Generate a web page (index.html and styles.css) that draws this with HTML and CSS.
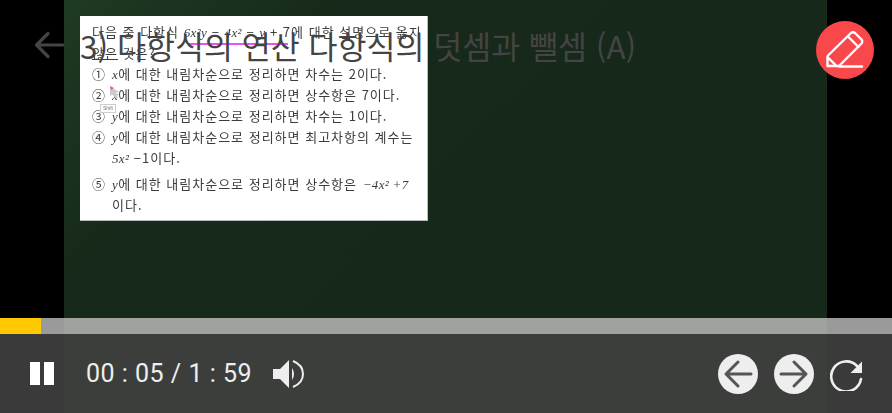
FILE: index.html
```html
<!DOCTYPE html>
<html lang="ko">
<head>
    <meta charset="UTF-8">
    <meta name="viewport" content="width=device-width, initial-scale=1.0">
    <title>다항식의 덧셈과 뺄셈</title>
    <link rel="stylesheet" href="styles.css">
</head>
<body>
    <div class="player">
        <!-- 영상 화면 -->
        <div class="video">
            <div class="slide">
                <p class="line line-first">다음 중 다항식 <i>6x²y</i> − <i>4x²</i> − <i>y</i> + 7에 대한 설명으로 옳지</p>
                <p class="line line-second"><u>않은</u> 것은?</p>
                <p class="line"><span class="num">①</span><i>x</i>에 대한 내림차순으로 정리하면 차수는 2이다.</p>
                <p class="line"><span class="num">②</span><i>x</i>에 대한 내림차순으로 정리하면 상수항은 7이다.</p>
                <p class="line"><span class="num">③</span><i>y</i>에 대한 내림차순으로 정리하면 차수는 1이다.</p>
                <p class="line"><span class="num">④</span><i>y</i>에 대한 내림차순으로 정리하면 최고차항의 계수는</p>
                <p class="line line-indent"><i>5x²</i> −1이다.</p>
                <p class="line line-gap"><span class="num">⑤</span><i>y</i>에 대한 내림차순으로 정리하면 상수항은 <i class="math">−4x² +7</i></p>
                <p class="line line-indent">이다.</p>
                <span class="pen-line"></span>
                <svg class="cursor" width="12" height="14" viewBox="0 0 12 14"><path d="M1 1l9 6-3 1 2 5-3 0-2-4-3 2z" fill="#ccc"/><path d="M1 1l4 2-3 2z" fill="#d05ac8"/></svg>
                <span class="key-tag">Shift</span>
            </div>
        </div>

        <!-- 상단 제목 -->
        <div class="top-bar">
            <svg class="back" width="32" height="30" viewBox="0 0 32 30"><path d="M30 15H4M15 3.500L3.500 15 15 26.500" fill="none" stroke="#444" stroke-width="3.200" stroke-linecap="round" stroke-linejoin="round"/></svg>
            <h1 class="title">3) 다항식의 연산 다항식의 덧셈과 뺄셈 (A)</h1>
        </div>
        <button class="pen-btn">
            <svg width="38" height="38" viewBox="0 0 38 38"><path d="M1.500 35V25L25 2q2-1.500 4 0l6.500 6.500q1.500 2 0 4L13 35zM1.500 26l9 9M22.500 6l10 10M13 35.500h23" fill="none" stroke="#fff" stroke-width="2.400" stroke-linecap="round" stroke-linejoin="round"/></svg>
        </button>

        <!-- 하단 컨트롤 -->
        <div class="bottom">
            <div class="progress"><div class="progress-fill"></div></div>
            <div class="controls">
                <div class="controls-left">
                    <div class="pause"><span></span><span></span></div>
                    <span class="time">00 : 05 / 1 : 59</span>
                    <svg class="volume" width="32" height="32" viewBox="0 0 32 32"><path d="M1 11h7l9-9v28l-9-9H1z" fill="#eee"/><path d="M20 10q4 6 0 12z" fill="#eee"/><path d="M21 3q10 4 10 13t-10 13" fill="none" stroke="#eee" stroke-width="2"/></svg>
                </div>
                <div class="controls-right">
                    <svg width="40" height="40" viewBox="0 0 40 40"><circle cx="20" cy="20" r="20" fill="#eee"/><path d="M33 20H8M20 8L8 20l12 12" fill="none" stroke="#555" stroke-width="3" stroke-linecap="round" stroke-linejoin="round"/></svg>
                    <svg width="40" height="40" viewBox="0 0 40 40"><circle cx="20" cy="20" r="20" fill="#eee"/><path d="M7 20h25M20 8l12 12-12 12" fill="none" stroke="#555" stroke-width="3" stroke-linecap="round" stroke-linejoin="round"/></svg>
                    <svg class="reload" width="34" height="34" viewBox="0 0 34 34"><path d="M27 9a15 15 0 1 0 4 13" fill="none" stroke="#eee" stroke-width="2.600" stroke-linecap="round"/><path d="M32 4.500V16H20.500z" fill="#eee"/></svg>
                </div>
            </div>
        </div>
    </div>
</body>
</html>
```

FILE: styles.css
```css
body {
    margin: 0;
    background: #000;
    font-family: 'Noto Sans CJK KR', Roboto, sans-serif;
}
.player {
    position: relative;
    width: 892px;
    height: 413px;
    overflow: hidden;
    background: #000;
}
.video {
    width: 763px;
    height: 413px;
    margin-left: 64px;
    padding: 16px 0 0 16px;
    box-sizing: border-box;
    background: linear-gradient(135deg, #1f3a22 0%, #17291a 25%, #16281a 100%);
}
.slide {
    position: relative;
    width: 348px;
    height: 205px;
    padding: 5px 0 0 12px;
    box-sizing: border-box;
    background: #fff;
    box-shadow: inset -1px -1px 0 #bbb;
    color: #3c3c3c;
    filter: blur(0.3px);
}
.line {
    margin: 0;
    height: 21px;
    font-size: 13px;
    line-height: 21px;
    letter-spacing: 1px;
    white-space: nowrap;
}
.line i {
    font-family: 'Liberation Serif', serif;
    font-size: 13px;
    letter-spacing: 0.35px;
}
.line-indent {
    padding-left: 20px;
}
.line-gap {
    margin-top: 5px;
}
.math {
    margin-left: 1px;
}
.num {
    display: inline-block;
    width: 20px;
}
.pen-line {
    position: absolute;
    left: 108px;
    top: 27px;
    width: 100px;
    height: 2px;
    background: #f050f0;
}
.cursor {
    position: absolute;
    left: 29px;
    top: 69px;
}
.key-tag {
    position: absolute;
    left: 20px;
    top: 88px;
    padding: 0 2px;
    border: 1px solid #ccc;
    background: #fff;
    font-family: 'Liberation Sans', sans-serif;
    font-size: 5px;
    line-height: 7px;
    color: #777;
}
.top-bar {
    position: absolute;
    left: 33px;
    top: 30px;
    display: flex;
    align-items: center;
    gap: 15px;
}
.title {
    margin: 0;
    font-size: 31.500px;
    font-weight: 400;
    line-height: 30px;
    color: #444;
    white-space: nowrap;
}
.pen-btn {
    position: absolute;
    left: 816px;
    top: 21px;
    width: 58px;
    height: 58px;
    padding: 0;
    border: none;
    border-radius: 50%;
    background: #f9484c;
    display: flex;
    align-items: center;
    justify-content: center;
}
.bottom {
    position: absolute;
    left: 0;
    right: 0;
    bottom: 0;
}
.progress {
    height: 16px;
    background: rgba(200, 200, 200, 0.77);
}
.progress-fill {
    width: 41px;
    height: 100%;
    background: #ffc800;
}
.controls {
    height: 79px;
    padding: 0 28px 0 30px;
    display: flex;
    align-items: center;
    justify-content: space-between;
    background: rgba(64, 64, 64, 0.9);
}
.controls-left, .controls-right {
    display: flex;
    align-items: center;
}
.pause {
    display: flex;
    gap: 4px;
}
.pause span {
    width: 10px;
    height: 23px;
    background: #fff;
}
.time {
    margin-left: 32px;
    font-family: Roboto, sans-serif;
    font-size: 25px;
    letter-spacing: 0.5px;
    color: #eee;
}
.volume {
    margin-left: 20px;
}
.controls-right {
    gap: 16px;
}
```
